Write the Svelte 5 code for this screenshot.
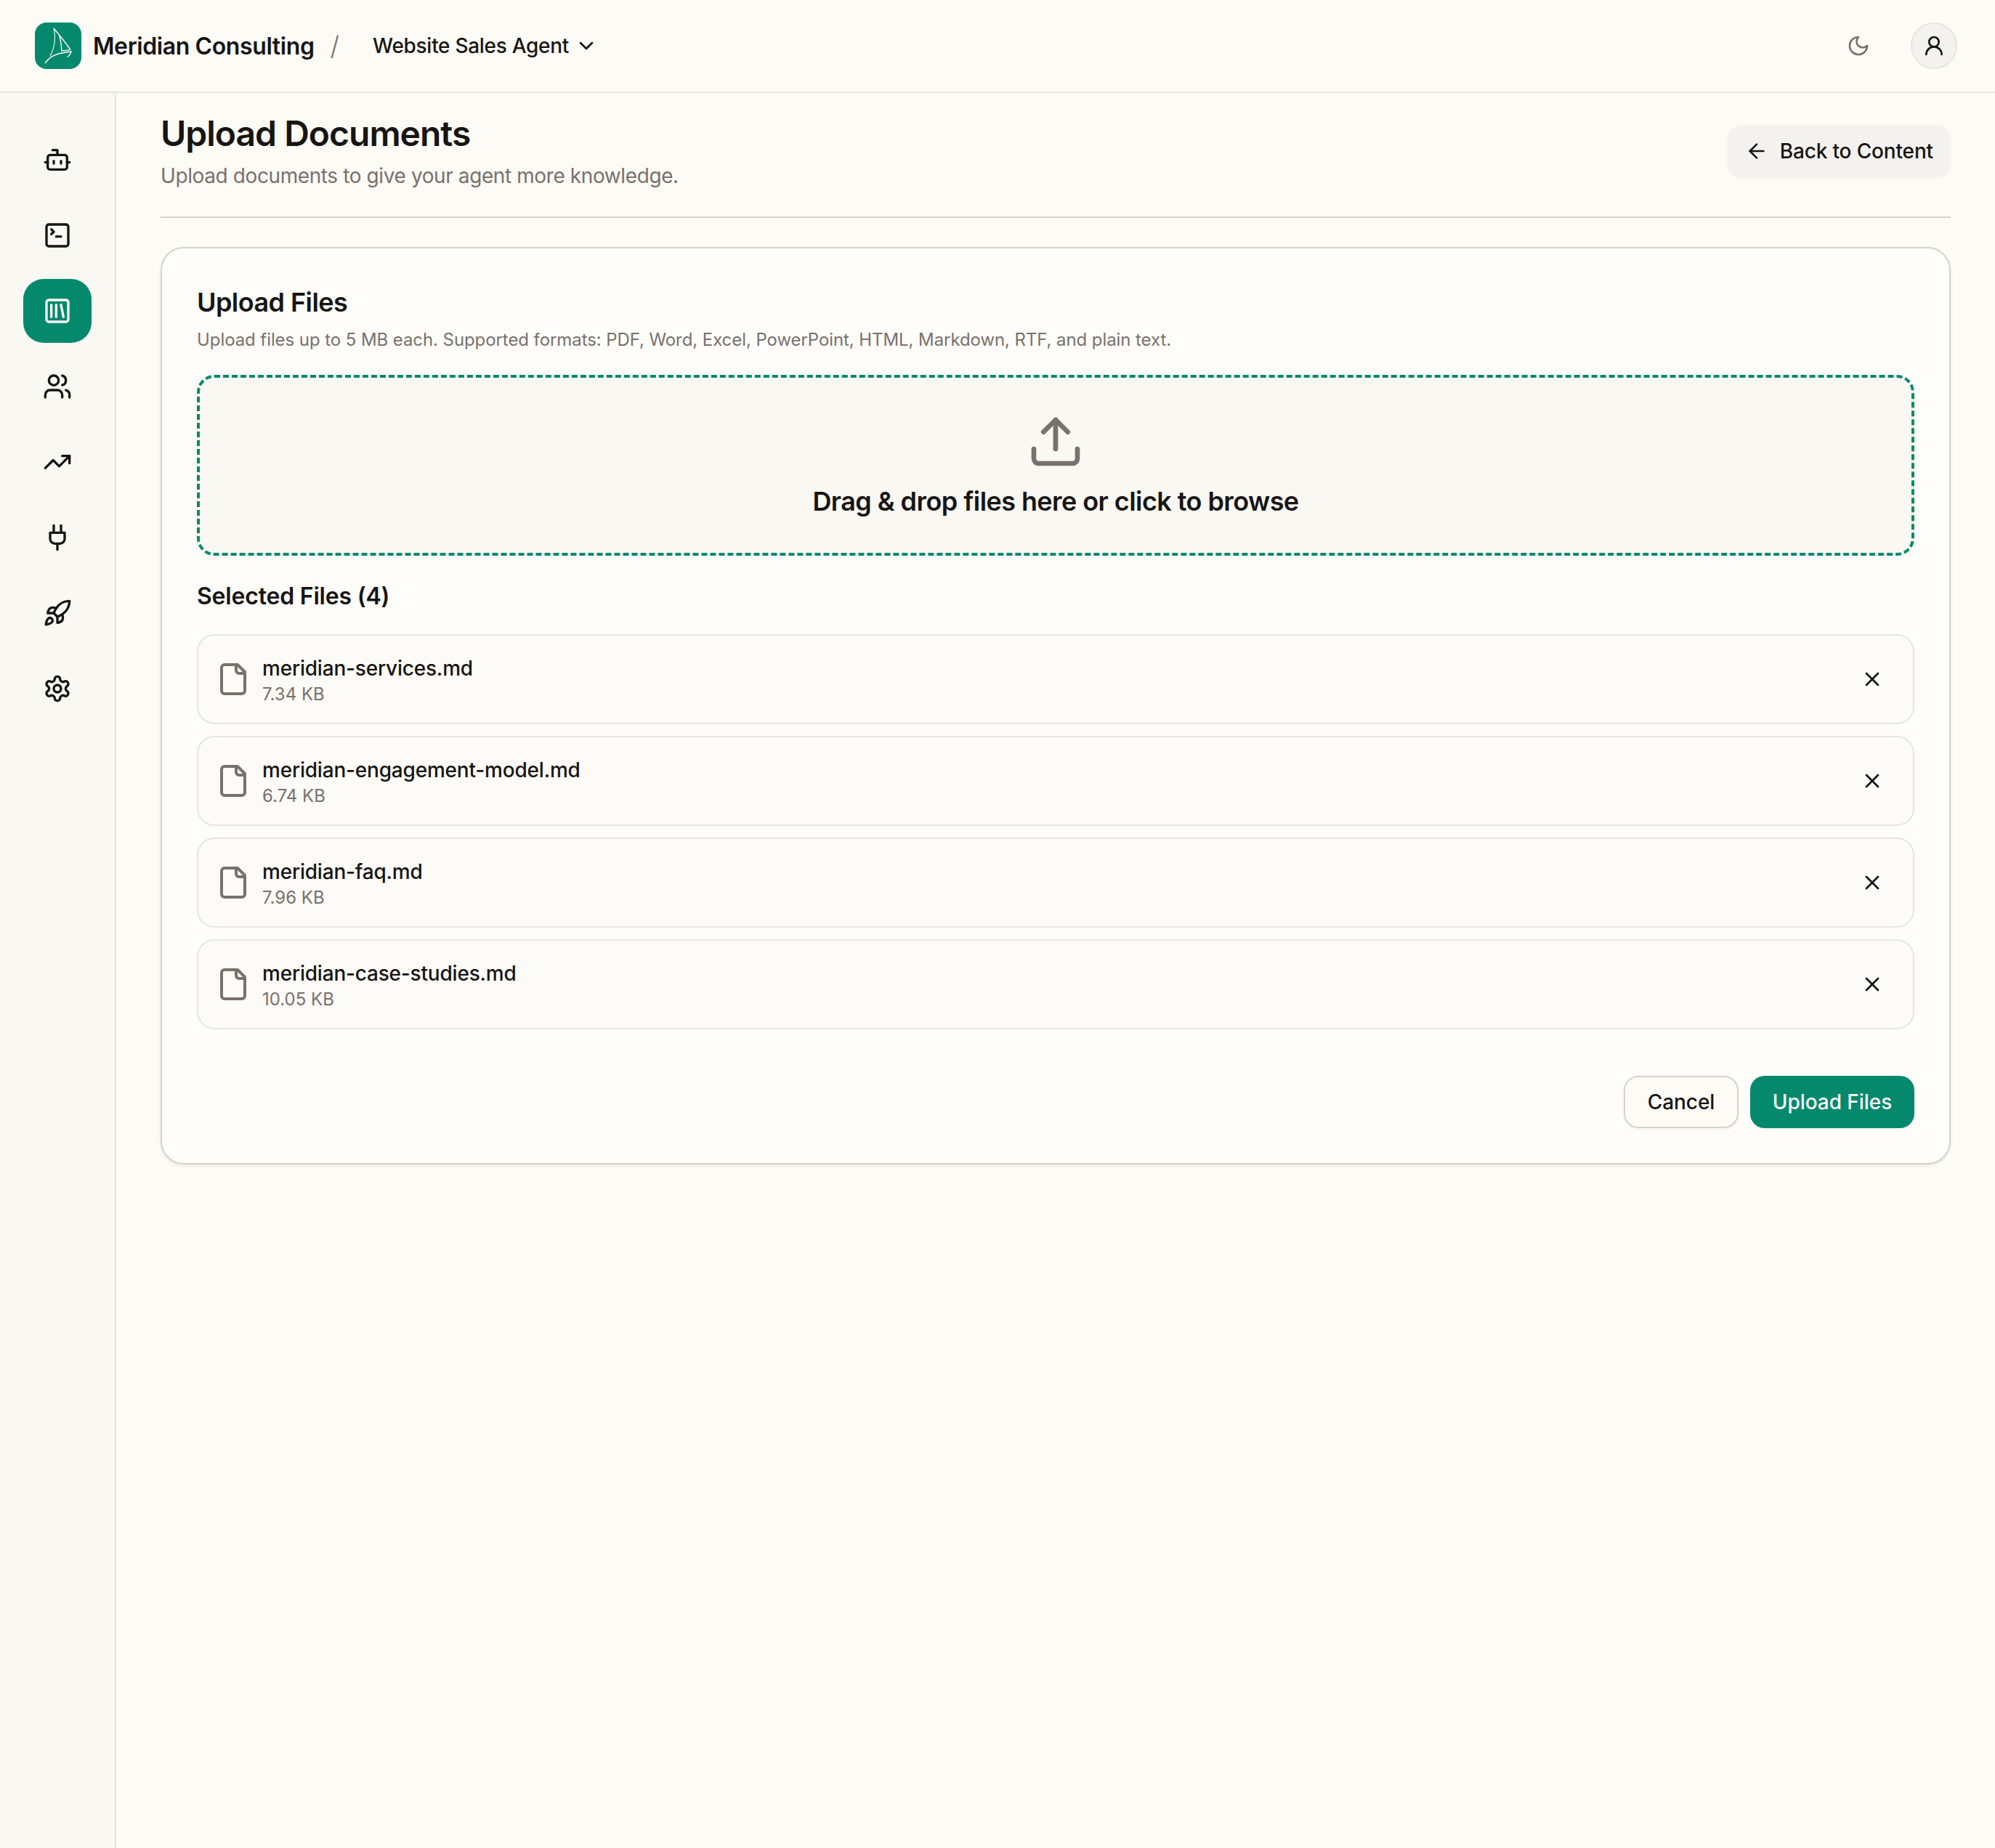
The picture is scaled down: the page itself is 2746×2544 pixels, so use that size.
<script>
  const files = [
    { name: 'meridian-services.md', size: '7.34 KB' },
    { name: 'meridian-engagement-model.md', size: '6.74 KB' },
    { name: 'meridian-faq.md', size: '7.96 KB' },
    { name: 'meridian-case-studies.md', size: '10.05 KB' }
  ];
  const nav = ['bot', 'terminal', 'library', 'users', 'trend', 'plug', 'rocket', 'settings'];
</script>

<div class="page">
  <header class="topbar">
    <div class="logo">
      <svg viewBox="0 0 64 64" width="64" height="64" fill="none" stroke="#fdfbf7" stroke-linecap="round" stroke-linejoin="round">
        <path stroke-width="1.1" d="M26.3 8.3C29 22 27 35 21.3 45.7" />
        <path stroke-width="1.4" d="M26.3 8.3C34 18 43 28 48.7 37.3C45 38.5 41 38.8 37 39C36.5 31 35.5 24 33.7 17.3" />
        <path stroke-width="1.4" d="M14.3 55.7C19 49 24 45.5 31 43.5C37 41.8 44 40.8 50.3 40C49 43 47.5 45.5 45.3 47.3" />
      </svg>
    </div>
    <span class="brand">Meridian Consulting</span>
    <span class="slash">/</span>
    <button class="agent">
      <span>Website Sales Agent</span>
      <svg class="ic32" viewBox="0 0 24 24"><path d="m6 9 6 6 6-6" /></svg>
    </button>
    <div class="top-right">
      <svg class="ic32 moon" viewBox="0 0 24 24"><path d="M12 3a6 6 0 0 0 9 9 9 9 0 1 1-9-9Z" /></svg>
      <div class="avatar">
        <svg class="ic32" viewBox="0 0 24 24"><circle cx="12" cy="8" r="5" /><path d="M20 21a8 8 0 0 0-16 0" /></svg>
      </div>
    </div>
  </header>

  <div class="body">
    <nav class="sidebar">
      {#each nav as item}
        <div class="nav-item" class:active={item === 'library'}>
          <svg class="ic40" viewBox="0 0 24 24">
            {#if item === 'bot'}
              <path d="M12 8V4H8" /><rect width="16" height="12" x="4" y="8" rx="2" /><path d="M2 14h2" /><path d="M20 14h2" /><path d="M15 13v2" /><path d="M9 13v2" />
            {:else if item === 'terminal'}
              <path d="m7 11 2-2-2-2" /><path d="M11 13h4" /><rect width="18" height="18" x="3" y="3" rx="2" />
            {:else if item === 'library'}
              <rect width="18" height="18" x="3" y="3" rx="2" /><path d="M7 7v10" /><path d="M11 7v10" /><path d="m15 7 2 10" />
            {:else if item === 'users'}
              <path d="M16 21v-2a4 4 0 0 0-4-4H6a4 4 0 0 0-4 4v2" /><path d="M16 3.128a4 4 0 0 1 0 7.744" /><path d="M22 21v-2a4 4 0 0 0-3-3.87" /><circle cx="9" cy="7" r="4" />
            {:else if item === 'trend'}
              <path d="M22 7 13.5 15.5 8.5 10.5 2 17" /><path d="M16 7h6v6" />
            {:else if item === 'plug'}
              <path d="M12 22v-5" /><path d="M9 8V2" /><path d="M15 8V2" /><path d="M18 8v5a4 4 0 0 1-4 4h-4a4 4 0 0 1-4-4V8Z" />
            {:else if item === 'rocket'}
              <path d="M4.5 16.5c-1.5 1.26-2 5-2 5s3.74-.5 5-2c.71-.84.7-2.13-.09-2.91a2.18 2.18 0 0 0-2.91-.09z" /><path d="m12 15-3-3a22 22 0 0 1 2-3.95A12.88 12.88 0 0 1 22 2c0 2.72-.78 7.5-6 11a22.35 22.35 0 0 1-4 2z" /><path d="M9 12H4s.55-3.03 2-4c1.62-1.08 5 0 5 0" /><path d="M12 15v5s3.03-.55 4-2c1.08-1.62 0-5 0-5" />
            {:else}
              <path d="M12.22 2h-.44a2 2 0 0 0-2 2v.18a2 2 0 0 1-1 1.73l-.43.25a2 2 0 0 1-2 0l-.15-.08a2 2 0 0 0-2.73.73l-.22.38a2 2 0 0 0 .73 2.73l.15.1a2 2 0 0 1 1 1.72v.51a2 2 0 0 1-1 1.74l-.15.09a2 2 0 0 0-.73 2.73l.22.38a2 2 0 0 0 2.73.73l.15-.08a2 2 0 0 1 2 0l.43.25a2 2 0 0 1 1 1.73V20a2 2 0 0 0 2 2h.44a2 2 0 0 0 2-2v-.18a2 2 0 0 1 1-1.73l.43-.25a2 2 0 0 1 2 0l.15.08a2 2 0 0 0 2.73-.73l.22-.39a2 2 0 0 0-.73-2.73l-.15-.08a2 2 0 0 1-1-1.74v-.5a2 2 0 0 1 1-1.74l.15-.09a2 2 0 0 0 .73-2.73l-.22-.38a2 2 0 0 0-2.73-.73l-.15.08a2 2 0 0 1-2 0l-.43-.25a2 2 0 0 1-1-1.73V4a2 2 0 0 0-2-2z" /><circle cx="12" cy="12" r="3" />
            {/if}
          </svg>
        </div>
      {/each}
    </nav>

    <main class="main">
      <div class="page-head">
        <div>
          <h1>Upload Documents</h1>
          <p class="sub">Upload documents to give your agent more knowledge.</p>
        </div>
        <button class="back">
          <svg class="ic32" viewBox="0 0 24 24"><path d="m12 19-7-7 7-7" /><path d="M19 12H5" /></svg>
          <span>Back to Content</span>
        </button>
      </div>

      <section class="card">
        <h2>Upload Files</h2>
        <p class="desc">Upload files up to 5 MB each. Supported formats: PDF, Word, Excel, PowerPoint, HTML, Markdown, RTF, and plain text.</p>

        <div class="drop">
          <svg class="ic80" viewBox="0 0 24 24"><path d="M21 15v4a2 2 0 0 1-2 2H5a2 2 0 0 1-2-2v-4" /><path d="M17 8 12 3 7 8" /><path d="M12 3v12" /></svg>
          <div class="drop-text">Drag &amp; drop files here or click to browse</div>
        </div>

        <h3>Selected Files ({files.length})</h3>
        <ul class="list">
          {#each files as f}
            <li class="row">
              <svg class="ic48" viewBox="0 0 24 24"><path d="M15 2H6a2 2 0 0 0-2 2v16a2 2 0 0 0 2 2h12a2 2 0 0 0 2-2V7Z" /><path d="M14 2v4a2 2 0 0 0 2 2h4" /></svg>
              <div class="file-info">
                <div class="file-name">{f.name}</div>
                <div class="file-size">{f.size}</div>
              </div>
              <button class="remove" aria-label="Remove">
                <svg class="ic32" viewBox="0 0 24 24"><path d="M18 6 6 18" /><path d="m6 6 12 12" /></svg>
              </button>
            </li>
          {/each}
        </ul>

        <div class="actions">
          <button class="btn cancel">Cancel</button>
          <button class="btn primary">Upload Files</button>
        </div>
      </section>
    </main>
  </div>
</div>

<style>
  :global(body) {
    margin: 0;
    background: #fdfbf6;
  }
  * { box-sizing: border-box; }
  .page {
    min-height: 2544px;
    display: flex;
    flex-direction: column;
    background: #fdfbf6;
    color: #171513;
    font-family: Inter, "Liberation Sans", sans-serif;
  }
  svg { display: block; flex: none; fill: none; stroke: currentColor; stroke-linecap: round; stroke-linejoin: round; stroke-width: 2; }
  .logo svg { stroke: #fdfbf7; }
  .ic32 { width: 32px; height: 32px; }
  .ic40 { width: 40px; height: 40px; }
  .ic48 { width: 48px; height: 48px; }
  .ic80 { width: 80px; height: 80px; }
  button { font-family: inherit; color: inherit; background: none; border: 0; padding: 0; }

  .topbar {
    height: 128px;
    flex: none;
    display: flex;
    align-items: center;
    padding: 0 52px 0 48px;
    border-bottom: 2px solid #e7e5e0;
  }
  .logo { width: 64px; height: 64px; border-radius: 16px; background: #05896d; flex: none; }
  .brand { margin-left: 16px; padding-top: 2px; font-size: 32px; font-weight: 600; letter-spacing: -0.4px; line-height: 48px; }
  .slash { margin-left: 22px; font-size: 36px; font-weight: 300; color: #78716c; line-height: 48px; }
  .agent { margin-left: 46px; display: flex; align-items: center; gap: 8px; font-size: 28px; font-weight: 450; letter-spacing: -0.3px; line-height: 40px; }
  .top-right { margin-left: auto; display: flex; align-items: center; gap: 56px; }
  .moon { color: #78716c; }
  .avatar {
    width: 64px; height: 64px; border-radius: 50%;
    display: flex; align-items: center; justify-content: center;
    background: #f4f2ee; border: 2px solid #e7e5e0;
  }

  .body { flex: 1; display: flex; }
  .sidebar {
    width: 160px;
    flex: none;
    padding-top: 48px;
    display: flex;
    flex-direction: column;
    align-items: center;
    gap: 16px;
    background: #faf8f3;
    border-right: 2px solid #e7e5e0;
  }
  .nav-item {
    width: 94px; height: 88px; border-radius: 28px;
    display: flex; align-items: center; justify-content: center;
    color: #171513;
  }
  .nav-item.active { background: #05896d; color: #fdfbf7; }

  .main { flex: 1; min-width: 0; padding: 24px 61px 0; }
  .page-head {
    display: flex;
    justify-content: space-between;
    align-items: center;
    padding-bottom: 36px;
    border-bottom: 2px solid #d6d3ce;
  }
  h1 { margin: 0; font-size: 48px; line-height: 64px; font-weight: 600; letter-spacing: -1px; }
  .sub { margin: 6px 0 0; font-size: 28px; line-height: 40px; color: #78716c; letter-spacing: -0.4px; }
  .back {
    display: flex; align-items: center; gap: 16px;
    height: 72px; padding: 0 24px;
    margin-top: 2px;
    border-radius: 20px;
    background: #f4f2ee;
    box-shadow: 0 2px 4px rgba(28, 25, 23, 0.03);
    font-size: 28px; font-weight: 450; letter-spacing: -0.15px; line-height: 40px;
  }

  .card {
    margin-top: 40px;
    padding: 48px;
    background: #fefdfa;
    border: 2px solid #d6d3ce;
    border-radius: 32px;
    box-shadow: 0 2px 4px rgba(28, 25, 23, 0.08);
  }
  h2 { margin: 0; font-size: 36px; line-height: 52px; font-weight: 600; letter-spacing: -0.55px; }
  .desc { margin: 6px 0 0; font-size: 24px; line-height: 40px; color: #78716c; letter-spacing: -0.08px; }
  .drop {
    margin-top: 28px;
    height: 249px;
    padding-top: 48px;
    display: flex;
    flex-direction: column;
    align-items: center;
    background: #faf8f3;
    border: 4px dashed #05896d;
    border-radius: 24px;
  }
  .ic80 { color: #78716c; }
  .drop-text { margin-top: 14px; font-size: 36px; line-height: 56px; font-weight: 600; letter-spacing: -0.57px; }
  h3 { margin: 32px 0 0; font-size: 32px; line-height: 48px; font-weight: 600; letter-spacing: -0.2px; }
  .list { list-style: none; margin: 28px 0 0; padding: 0; display: flex; flex-direction: column; gap: 16px; }
  .row {
    height: 124px;
    padding: 0 24px;
    display: flex;
    align-items: center;
    gap: 16px;
    background: #fdfbf7;
    border: 2px solid #e7e5e0;
    border-radius: 24px;
  }
  .ic48 { color: #78716c; }
  .file-info { flex: 1; min-width: 0; padding-top: 2px; }
  .file-name { font-size: 28px; line-height: 40px; font-weight: 450; letter-spacing: -0.2px; }
  .file-size { font-size: 24px; line-height: 32px; color: #78716c; }
  .remove { width: 64px; height: 64px; display: flex; align-items: center; justify-content: center; }
  .actions { margin-top: 64px; display: flex; justify-content: flex-end; gap: 16px; }
  .btn { height: 72px; border-radius: 20px; font-size: 28px; line-height: 40px; font-weight: 500; letter-spacing: -0.05px; }
  .cancel { width: 158px; background: #fdfbf6; border: 2px solid #d6d3ce; box-shadow: 0 2px 4px rgba(28,25,23,.05); }
  .primary { width: 226px; background: #05896d; color: #fdfbf7; box-shadow: 0 2px 4px rgba(28,25,23,.05); }
</style>
